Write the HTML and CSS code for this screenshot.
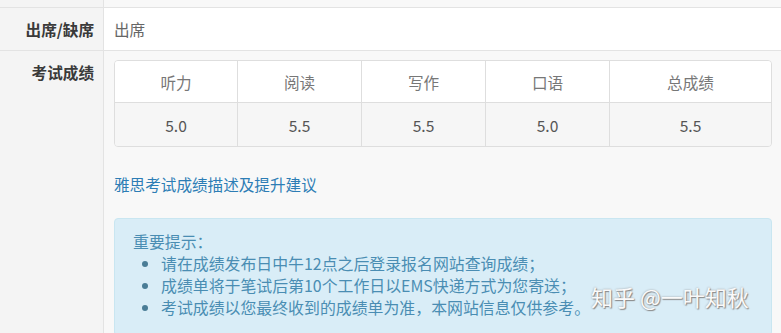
FILE: index.html
```html
<!DOCTYPE html>
<html>
<head>
<meta charset="utf-8">
<title>成绩查询</title>
<link rel="stylesheet" href="styles.css">
</head>
<body>
<div class="info-table">
    <div class="row row-prev">
        <div class="label"></div>
        <div class="value"></div>
    </div>
    <div class="row">
        <div class="label">出席/缺席</div>
        <div class="value value-white">出席</div>
    </div>
    <div class="row row-last">
        <div class="label">考试成绩</div>
        <div class="value">
            <table class="score-table">
                <tr>
                    <th>听力</th>
                    <th>阅读</th>
                    <th>写作</th>
                    <th>口语</th>
                    <th>总成绩</th>
                </tr>
                <tr>
                    <td>5.0</td>
                    <td>5.5</td>
                    <td>5.5</td>
                    <td>5.0</td>
                    <td>5.5</td>
                </tr>
            </table>
            <a class="score-link" href="#">雅思考试成绩描述及提升建议</a>
            <div class="alert">
                <div class="alert-title">重要提示：</div>
                <ul>
                    <li>请在成绩发布日中午12点之后登录报名网站查询成绩；</li>
                    <li>成绩单将于笔试后第10个工作日以EMS快递方式为您寄送；</li>
                    <li>考试成绩以您最终收到的成绩单为准，本网站信息仅供参考。</li>
                </ul>
                <div class="watermark">知乎 @一叶知秋</div>
            </div>
        </div>
    </div>
</div>
</body>
</html>
```

FILE: styles.css
```css
body {
    margin: 0;
    font-family: "Noto Sans CJK SC", "Noto Sans", sans-serif;
    font-size: 15.6px;
    color: #666;
    background-color: #f8f8f8;
    overflow: hidden;
}

.info-table {
    width: 781px;
    height: 333px;
    overflow: hidden;
}

.row {
    display: grid;
    grid-template-columns: 104px 1fr;
    border-top: 1px solid #e3e3e3;
}

.row-prev {
    height: 7px;
    border-top: none;
}

.label {
    background-color: #f4f4f4;
    border-right: 1px solid #e3e3e3;
    text-align: right;
    padding: 0 9px 0 0;
    font-weight: bold;
    color: #3a3a3a;
    line-height: 42px;
}

.row-last .label {
    line-height: 20px;
    padding-top: 11px;
}

.value {
    padding: 0 9px 0 10px;
    line-height: 42px;
    background-color: #f8f8f8;
}

.value-white {
    background-color: white;
    color: #666;
}

.row-last .value {
    padding-top: 9px;
    line-height: normal;
    height: 282px;
}

.score-table {
    width: 100%;
    border-collapse: separate;
    border-spacing: 0;
    border: 1px solid #dedede;
    border-radius: 4px;
    overflow: hidden;
}

.score-table th,
.score-table td {
    text-align: center;
    font-weight: normal;
    border-left: 1px solid #dedede;
    padding: 0;
}

.score-table th:first-child,
.score-table td:first-child {
    border-left: none;
    width: 122px;
}

.score-table th:nth-child(2),
.score-table th:nth-child(3),
.score-table th:nth-child(4) {
    width: 123px;
}

.score-table th {
    height: 41px;
    background-color: white;
    color: #777;
    border-bottom: 1px solid #dedede;
}

.score-table td {
    height: 43px;
    background-color: #f6f6f6;
    color: #555;
}

.score-link {
    display: block;
    margin-top: 26px;
    line-height: 22px;
    color: #2d7db5;
    text-decoration: none;
}

.alert {
    position: relative;
    margin-top: 23px;
    padding: 12px 18px 14px;
    background-color: #d9edf7;
    border: 1px solid #c9e6f1;
    border-radius: 4px;
    color: #4a8db3;
    font-size: 15.9px;
    line-height: 22px;
    height: 90px;
}

.alert ul {
    margin: 0;
    padding-left: 28px;
}

.alert li::marker {
    color: #4a7d96;
}

.watermark {
    position: absolute;
    left: 476px;
    top: 66px;
    font-size: 22px;
    color: #fafafa;
    text-shadow: 1px 1px 1px #888, 0 0 2px #999;
    white-space: nowrap;
}
```
